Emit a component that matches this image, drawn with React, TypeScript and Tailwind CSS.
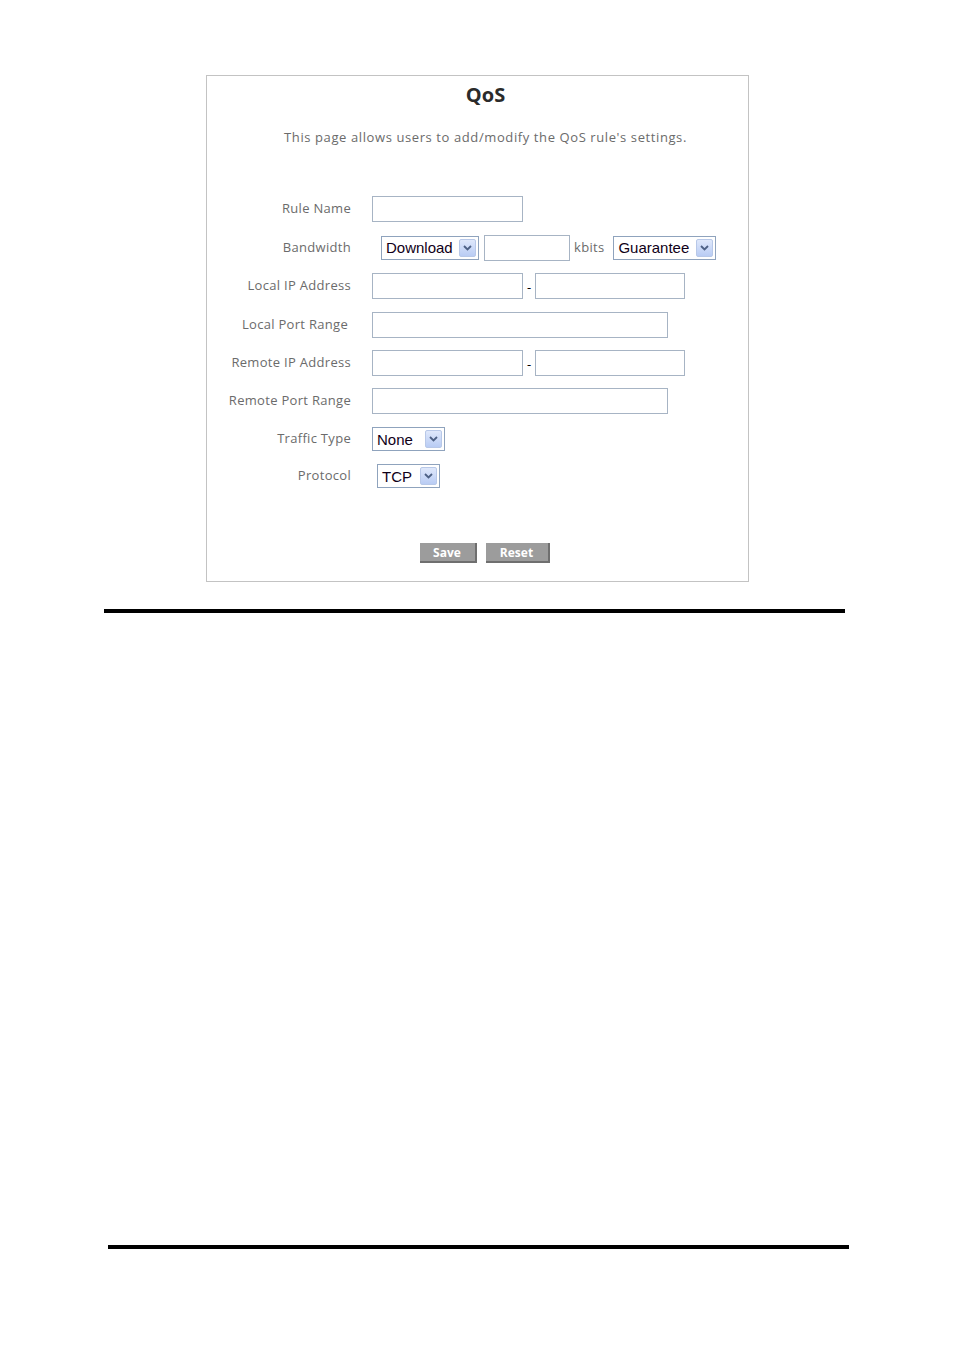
import React from "react";

const labelCls =
  "w-[144px] shrink-0 text-right text-[13px] tracking-[0.3px] text-[#6b6b6b] font-['Open_Sans',sans-serif]";

function TextBox({ w }: { w: string }) {
  return <div className={`${w} h-[26px] border border-[#a7b4c4] bg-white`} />;
}

function Select({ value, w }: { value: string; w: string }) {
  return (
    <div
      className={`${w} h-[24px] border border-[#8fa3bd] bg-white flex items-center justify-between pl-[4px] pr-[2px]`}
    >
      <span className="text-[15px] leading-none text-[#100018] font-['Liberation_Sans',Arial,sans-serif]">
        {value}
      </span>
      <span className="w-[17px] h-[18px] rounded-[2px] border border-[#b8c8e8] bg-gradient-to-b from-[#dfe8fb] to-[#b9ccf4] flex items-center justify-center">
        <svg width="9" height="6" viewBox="0 0 9 6">
          <path d="M1 1 L4.5 4.5 L8 1" fill="none" stroke="#4d6185" strokeWidth="1.8" />
        </svg>
      </span>
    </div>
  );
}

function Row({ label, h, children, lpr = "" }: { label: string; h: string; children?: React.ReactNode; lpr?: string }) {
  return (
    <div className={`flex items-center ${h}`}>
      <div className={`${labelCls} ${lpr}`}>{label}</div>
      <div className="ml-[21px] flex items-center">{children}</div>
    </div>
  );
}

function Dash() {
  return (
    <span className="w-[12px] text-center text-[13px] text-black pt-[4px] font-['Open_Sans',sans-serif]">-</span>
  );
}

export default function App() {
  return (
    <div className="min-h-[1350px] bg-white pt-[75px]">
      <div className="ml-[206px] w-[543px] h-[507px] border border-[#c3c3c3] flex flex-col">
        <h1 className="mt-[7px] pl-[16px] text-center text-[20px] leading-[24px] font-bold text-[#2b2b2b] font-['Open_Sans',sans-serif]">
          QoS
        </h1>
        <p className="mt-[21px] pl-[16px] text-center text-[13px] tracking-[0.6px] leading-[18px] text-[#6b6b6b] font-['Open_Sans',sans-serif]">
          This page allows users to add/modify the QoS rule's settings.
        </p>

        <div className="mt-[44px] flex flex-col">
          <Row label="Rule Name" h="h-[38px]">
            <TextBox w="w-[151px]" />
          </Row>
          <Row label="Bandwidth" h="h-[39px]">
            <div className="ml-[9px]">
              <Select value="Download" w="w-[98px]" />
            </div>
            <div className="ml-[5px]">
              <TextBox w="w-[86px]" />
            </div>
            <span className="ml-[4px] text-[13px] tracking-[0.3px] text-[#6b6b6b] font-['Open_Sans',sans-serif]">kbits</span>
            <div className="ml-[9px]">
              <Select value="Guarantee" w="w-[103px]" />
            </div>
          </Row>
          <Row label="Local IP Address" h="h-[38px]">
            <TextBox w="w-[151px]" />
            <Dash />
            <TextBox w="w-[150px]" />
          </Row>
          <Row label="Local Port Range" h="h-[39px]" lpr="pr-[3px]">
            <TextBox w="w-[296px]" />
          </Row>
          <Row label="Remote IP Address" h="h-[38px]">
            <TextBox w="w-[151px]" />
            <Dash />
            <TextBox w="w-[150px]" />
          </Row>
          <Row label="Remote Port Range" h="h-[38px]">
            <TextBox w="w-[296px]" />
          </Row>
          <Row label="Traffic Type" h="h-[38px]">
            <Select value="None" w="w-[73px]" />
          </Row>
          <Row label="Protocol" h="h-[36px]">
            <div className="ml-[5px]">
              <Select value="TCP" w="w-[63px]" />
            </div>
          </Row>
        </div>

        <div className="mt-[49px] flex justify-center gap-[9px] pl-[14px]">
          <button className="w-[57px] h-[20px] pt-[2px] bg-[#9c9c9c] border-b-2 border-r-2 border-[#6f6f6f] text-white text-[12px] font-bold font-['Open_Sans',sans-serif] leading-none">
            Save
          </button>
          <button className="w-[64px] h-[20px] pt-[2px] bg-[#9c9c9c] border-b-2 border-r-2 border-[#6f6f6f] text-white text-[12px] font-bold font-['Open_Sans',sans-serif] leading-none">
            Reset
          </button>
        </div>
      </div>

      <div className="mt-[27px] ml-[104px] w-[741px] h-[4px] bg-black" />
      <div className="mt-[632px] ml-[108px] w-[741px] h-[4px] bg-black" />
    </div>
  );
}
